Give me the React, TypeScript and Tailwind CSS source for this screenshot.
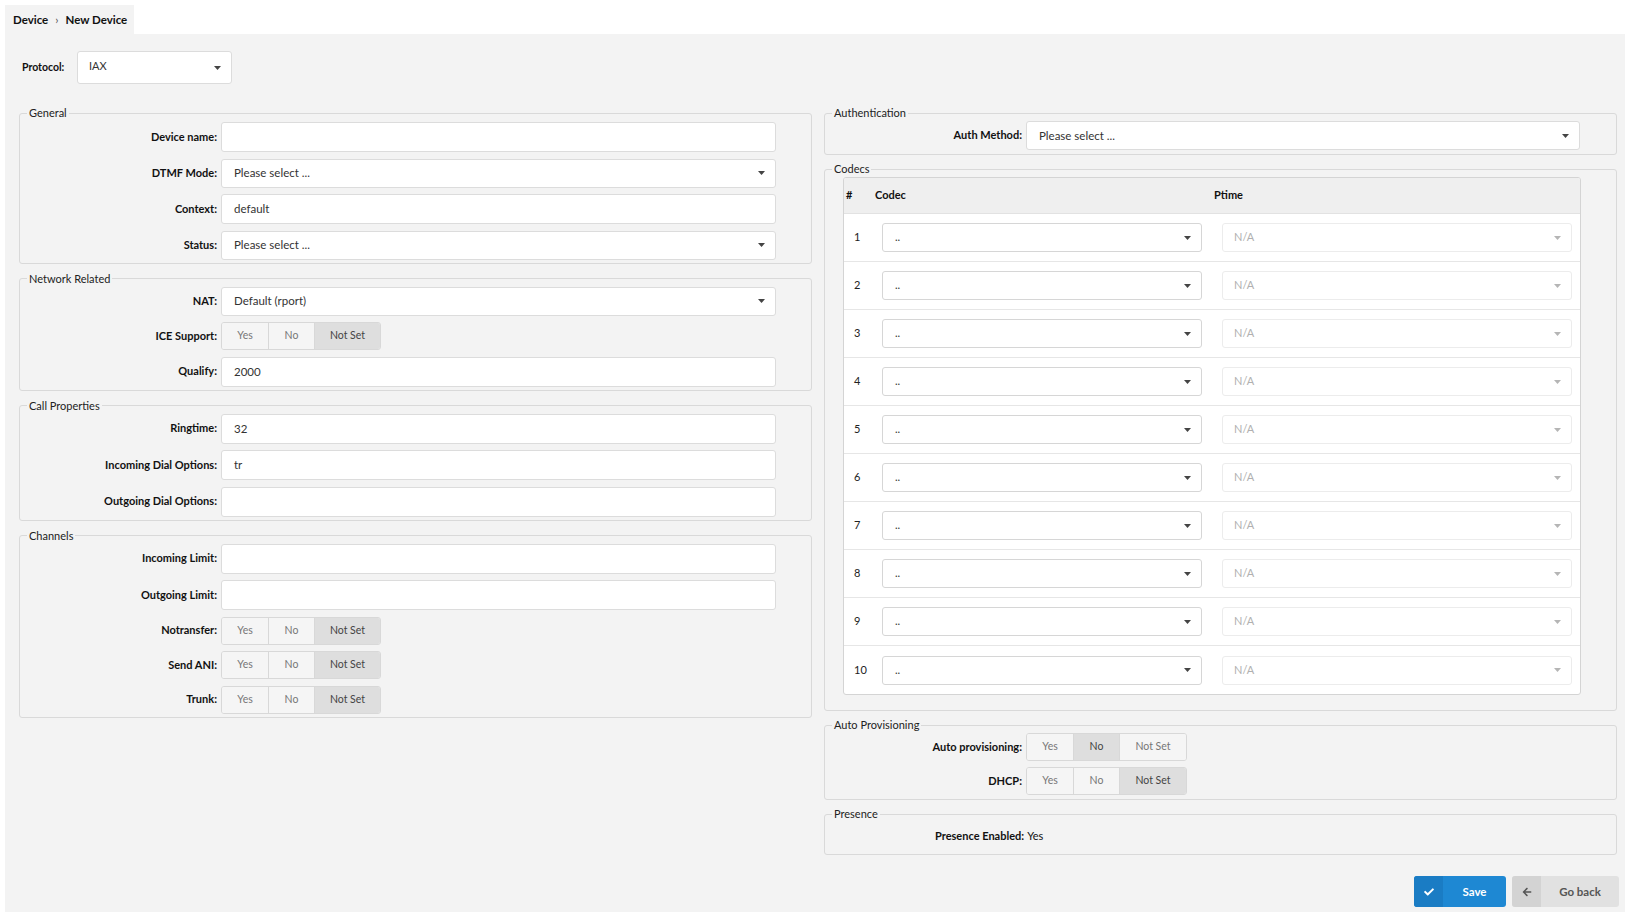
import React from 'react';
import { FaCheck, FaArrowLeft } from 'react-icons/fa';

const font = { fontFamily: 'Lato, "Open Sans", sans-serif' };

const Caret: React.FC<{ light?: boolean }> = ({ light }) => (
  <svg width="7" height="4" viewBox="0 0 7 4" className="shrink-0">
    <path d="M0 0h7L3.5 4z" fill={light ? '#b5b5b5' : '#444'} />
  </svg>
);

const TextBox: React.FC<{ value?: string }> = ({ value }) => (
  <div className="flex h-[30px] w-[555px] items-center rounded-[3px] border border-[#dcdcdc] bg-white px-[12px] text-[11.5px] text-[#333]">
    {value}
  </div>
);

const SelectBox: React.FC<{ value: string; w?: string }> = ({ value, w = 'w-[555px]' }) => (
  <div className={`flex h-[29px] ${w} items-center justify-between rounded-[3px] border border-[#dcdcdc] bg-white pl-[12px] pr-[10px] text-[11.5px] text-[#333]`}>
    <span>{value}</span>
    <Caret />
  </div>
);

const Toggle: React.FC<{ active: 'Yes' | 'No' | 'Not Set'; wide?: boolean }> = ({ active, wide }) => {
  const opts: Array<'Yes' | 'No' | 'Not Set'> = ['Yes', 'No', 'Not Set'];
  return (
    <div className="flex h-[28px] overflow-hidden rounded-[3px] border border-[#d8d8d8] text-[10.5px]">
      {opts.map((o, i) => (
        <div
          key={o}
          className={`flex items-center justify-center ${o === 'Not Set' ? (wide ? 'w-[67px]' : 'w-[66px]') : 'w-[46px]'} ${i > 0 ? 'border-l border-[#d8d8d8]' : ''} ${o === active ? 'bg-[#dedede] text-[#444]' : 'bg-[#f5f5f5] text-[#777]'}`}
        >
          {o}
        </div>
      ))}
    </div>
  );
};

const Row: React.FC<{ label: string; children: React.ReactNode }> = ({ label, children }) => (
  <div className="flex items-center">
    <div className="w-[201px] pr-[4px] text-right text-[11px] font-bold text-[#111]">{label}</div>
    {children}
  </div>
);

const Fieldset: React.FC<{ title: string; children: React.ReactNode; className?: string }> = ({ title, children, className = '' }) => (
  <fieldset className={`rounded-[3px] border border-[#d9d9d9] ${className}`}>
    <legend className="ml-[7px] px-[2px] text-[11px] leading-[16px] text-[#222]">{title}</legend>
    {children}
  </fieldset>
);

export default function App() {
  const codecs = Array.from({ length: 10 }, (_, i) => i + 1);

  return (
    <div className="min-h-[912px] bg-white pl-[5px] pt-[5px]" style={font}>
      <div className="flex h-[29px] w-[129px] items-center bg-[#f3f3f3] pl-[8px] text-[11.5px] font-bold text-[#111]">
        <span>Device</span>
        <span className="mx-[7px] font-normal text-[#555]">›</span>
        <span>New Device</span>
      </div>

      <div className="min-h-[878px] bg-[#f3f3f3] pl-[14px] pr-[6px] pt-[17px]">
        <div className="flex items-center">
          <span className="w-[58px] pl-[3px] text-[10.5px] font-bold text-[#111]">Protocol:</span>
          <div className="flex h-[33px] w-[155px] items-center justify-between rounded-[3px] border border-[#dcdcdc] bg-white pl-[11px] pr-[10px] text-[11px] text-[#333]">
            <span className="-mt-[2px]">IAX</span>
            <Caret />
          </div>
        </div>

        <div className="mt-[21px] grid grid-cols-[793px_793px] gap-x-[12px]">
          {/* left column */}
          <div className="flex flex-col gap-[7px]">
            <Fieldset title="General" className="pb-[3px]">
              <div className="flex flex-col gap-[6.5px] pt-px">
                <Row label="Device name:"><TextBox /></Row>
                <Row label="DTMF Mode:"><SelectBox value="Please select ..." /></Row>
                <Row label="Context:"><TextBox value="default" /></Row>
                <Row label="Status:"><SelectBox value="Please select ..." /></Row>
              </div>
            </Fieldset>

            <Fieldset title="Network Related" className="pb-[3px]">
              <div className="flex flex-col gap-[6.5px]">
                <Row label="NAT:"><SelectBox value="Default (rport)" /></Row>
                <Row label="ICE Support:"><Toggle active="Not Set" /></Row>
                <Row label="Qualify:"><TextBox value="2000" /></Row>
              </div>
            </Fieldset>

            <Fieldset title="Call Properties" className="pb-[3px]">
              <div className="flex flex-col gap-[6.5px]">
                <Row label="Ringtime:"><TextBox value="32" /></Row>
                <Row label="Incoming Dial Options:"><TextBox value="tr" /></Row>
                <Row label="Outgoing Dial Options:"><TextBox /></Row>
              </div>
            </Fieldset>

            <Fieldset title="Channels" className="pb-[3px]">
              <div className="flex flex-col gap-[6.5px]">
                <Row label="Incoming Limit:"><TextBox /></Row>
                <Row label="Outgoing Limit:"><TextBox /></Row>
                <Row label="Notransfer:"><Toggle active="Not Set" /></Row>
                <Row label="Send ANI:"><Toggle active="Not Set" /></Row>
                <Row label="Trunk:"><Toggle active="Not Set" /></Row>
              </div>
            </Fieldset>
          </div>

          {/* right column */}
          <div className="flex flex-col gap-[6px]">
            <Fieldset title="Authentication" className="pb-[4px]">
              <Row label="Auth Method:"><SelectBox value="Please select ..." w="w-[554px]" /></Row>
            </Fieldset>

            <Fieldset title="Codecs" className="pb-[15px]">
              <div className="ml-[18px] w-[738px] overflow-hidden rounded-[3px] border border-[#d4d4d4] bg-white">
                <div className="flex h-[36px] items-center border-b border-[#e2e2e2] bg-[#efefef] text-[11px] font-bold text-[#111]">
                  <span className="w-[31px] pl-[2px]">#</span>
                  <span className="w-[339px]">Codec</span>
                  <span>Ptime</span>
                </div>
                {codecs.map((n) => (
                  <div key={n} className={`flex h-[48px] items-center ${n < 10 ? 'border-b border-[#e6e6e6]' : ''}`}>
                    <span className="w-[38px] pl-[10px] text-[11px] text-[#222]">{n}</span>
                    <div className="flex h-[29px] w-[320px] items-center justify-between rounded-[3px] border border-[#d6d6d6] bg-white pl-[12px] pr-[10px] text-[11px] text-[#333]">
                      <span>..</span>
                      <Caret />
                    </div>
                    <div className="ml-[20px] flex h-[29px] w-[350px] items-center justify-between rounded-[3px] border border-[#ececec] bg-white pl-[11px] pr-[10px] text-[11px] text-[#b0b0b0]">
                      <span>N/A</span>
                      <Caret light />
                    </div>
                  </div>
                ))}
              </div>
            </Fieldset>

            <Fieldset title="Auto Provisioning" className="pb-[4px]">
              <div className="flex flex-col gap-[6px]">
                <Row label="Auto provisioning:"><Toggle active="No" wide /></Row>
                <Row label="DHCP:"><Toggle active="Not Set" wide /></Row>
              </div>
            </Fieldset>

            <Fieldset title="Presence" className="pb-[3px]">
              <div className="flex h-[29px] items-center pl-[110px] text-[11px] text-[#111]">
                <span className="font-bold">Presence Enabled:</span>
                <span className="ml-[3px]">Yes</span>
              </div>
            </Fieldset>

            <div className="mt-[15px] flex justify-end gap-[6px]">
              <button className="flex h-[31px] w-[92px] overflow-hidden rounded-[3px] bg-[#1e88d3] text-[11.5px] font-bold text-white">
                <span className="flex h-full w-[29px] items-center justify-center bg-[#1a7cc4]">
                  <FaCheck size={10} />
                </span>
                <span className="flex flex-1 items-center justify-center">Save</span>
              </button>
              <button className="-mr-[2px] flex h-[31px] w-[107px] overflow-hidden rounded-[3px] bg-[#e1e1e1] text-[11.5px] font-bold text-[#555]">
                <span className="flex h-full w-[29px] items-center justify-center bg-[#d3d3d3]">
                  <FaArrowLeft size={10} />
                </span>
                <span className="flex flex-1 items-center justify-center">Go back</span>
              </button>
            </div>
          </div>
        </div>
      </div>
    </div>
  );
}
